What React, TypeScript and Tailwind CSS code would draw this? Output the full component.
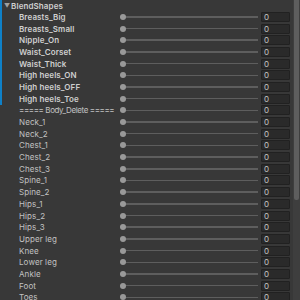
import React from "react";

const rows: { name: string; bold?: boolean }[] = [
  { name: "Breasts_Big", bold: true },
  { name: "Breasts_Small", bold: true },
  { name: "Nipple_On", bold: true },
  { name: "Waist_Corset", bold: true },
  { name: "Waist_Thick", bold: true },
  { name: "High heels_ON", bold: true },
  { name: "High heels_OFF", bold: true },
  { name: "High heels_Toe", bold: true },
  { name: "===== Body_Delete =====" },
  { name: "Neck_1" },
  { name: "Neck_2" },
  { name: "Chest_1" },
  { name: "Chest_2" },
  { name: "Chest_3" },
  { name: "Spine_1" },
  { name: "Spine_2" },
  { name: "Hips_1" },
  { name: "Hips_2" },
  { name: "Hips_3" },
  { name: "Upper leg" },
  { name: "Knee" },
  { name: "Lower leg" },
  { name: "Ankle" },
  { name: "Foot" },
  { name: "Toes" },
];

function Row({ name, bold }: { name: string; bold?: boolean }) {
  const divider = name.startsWith("=");
  return (
    <div className="relative flex h-[11.7px] items-center">
      {bold && <div className="absolute left-0 top-0 h-full w-[2px] bg-[#0f81c8]" />}
      <div
        className={
          "w-[120px] shrink-0 whitespace-nowrap pl-[19px] leading-none " +
          (divider ? "tracking-[-0.4px] " : "tracking-[0.1px] ") +
          (bold ? "font-semibold text-[#cfcfcf]" : "text-[#c2c2c2]")
        }
      >
        {name}
      </div>
      <div className="relative flex h-full flex-1 items-center">
        <div className="h-[1.5px] w-full bg-[#5e5e5e]" />
        <div className="absolute left-0 top-1/2 h-[6px] w-[6px] -translate-y-1/2 rounded-full bg-[#999999]" />
      </div>
      <div className="ml-[3px] flex h-[10px] w-[29px] shrink-0 items-center rounded-[1px] border border-[#212121] bg-[#2a2a2a] pl-[2px] leading-none text-[#c4c4c4]">
        0
      </div>
      <div className="w-[10px] shrink-0" />
    </div>
  );
}

export default function App() {
  return (
    <div
      className="relative h-[300px] w-[300px] overflow-hidden bg-[#383838] text-[8px]"
      style={{ fontFamily: "Inter, 'Liberation Sans', sans-serif" }}
    >
      <div className="absolute right-0 top-0 h-full w-[7px] bg-[#3e3e3e]">
        <div className="ml-[1px] h-[200px] w-[5px] rounded-b-[2px] bg-[#5e5e5e]" />
      </div>
      <div className="relative flex h-[11px] items-center">
        <div className="absolute left-0 top-0 h-full w-[2px] bg-[#0f81c8]" />
        <span className="ml-[4px] text-[6px] leading-none text-[#a0a0a0]">▼</span>
        <span className="ml-[1px] font-semibold leading-none tracking-[0.1px] text-[#cfcfcf]">BlendShapes</span>
      </div>
      {rows.map((r) => (
        <Row key={r.name} name={r.name} bold={r.bold} />
      ))}
    </div>
  );
}
